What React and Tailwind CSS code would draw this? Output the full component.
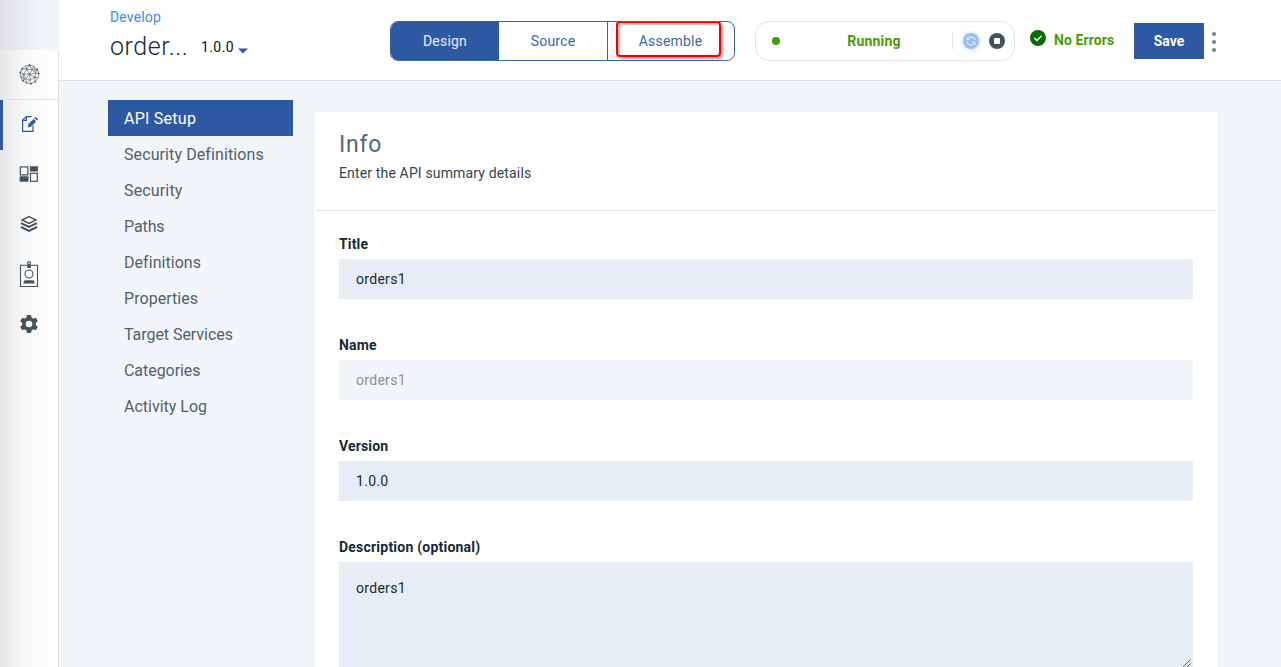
import React from "react";

const navItems = [
  ["API Setup", "tracking-[0.25px]"],
  ["Security Definitions", "tracking-[0.1px]"],
  ["Security", "tracking-[0.15px]"],
  ["Paths", "tracking-[-0.1px]"],
  ["Definitions", "tracking-[0.05px]"],
  ["Properties", "tracking-[0.05px]"],
  ["Target Services", "tracking-[-0.05px]"],
  ["Categories", "tracking-[-0.05px]"],
  ["Activity Log", "tracking-[0px]"],
];

function MeshIcon() {
  return (
    <svg width="21" height="21" viewBox="0 0 22 22" fill="none" stroke="#66737d" strokeWidth="0.75" strokeLinejoin="round">
      <path d="M11 1 L15.5 2.3 L19 5.5 L20.7 10 L20 14.5 L17 18.5 L12.5 20.8 L8 20 L4 17.5 L1.5 13.5 L1.3 9 L3.5 4.8 L7 2 Z" />
      <path d="M11 1 L8 5.5 L13.5 6 Z M15.5 2.3 L13.5 6 L19 5.5 L17.5 9.5 Z M20.7 10 L17.5 9.5 L16.5 14 L20 14.5 M17 18.5 L16.5 14 L12 16.5 L12.5 20.8 M8 20 L12 16.5 L7 15.5 Z M4 17.5 L7 15.5 L1.5 13.5 L5 10.5 Z M1.3 9 L5 10.5 L8 5.5 L3.5 4.8 Z M7 2 L8 5.5 M11 10.8 L8 5.5 M11 10.8 L13.5 6 M11 10.8 L17.5 9.5 M11 10.8 L16.5 14 M11 10.8 L12 16.5 M11 10.8 L7 15.5 M11 10.8 L5 10.5 M7 15.5 L5 10.5 M13.5 6 L17.5 9.5" />
      <g fill="#44525d" stroke="none">
        <circle cx="11" cy="1.2" r="0.9" /><circle cx="19" cy="5.5" r="0.9" /><circle cx="20.6" cy="10" r="0.9" />
        <circle cx="17" cy="18.5" r="0.9" /><circle cx="12.5" cy="20.7" r="0.9" /><circle cx="4" cy="17.5" r="0.9" />
        <circle cx="1.4" cy="9" r="0.9" /><circle cx="3.5" cy="4.8" r="0.9" /><circle cx="8" cy="5.5" r="0.8" />
        <circle cx="11" cy="10.8" r="0.8" /><circle cx="16.5" cy="14" r="0.8" />
      </g>
    </svg>
  );
}

function EditIcon() {
  return (
    <svg width="18" height="18" viewBox="0 0 18 18" fill="none">
      <path d="M10.5 1.6 H5.2 L1.6 5.2 V16.4 H12 V10.5 M5.4 1.6 V5.4 H1.6" stroke="#2d58a2" strokeWidth="1.2" />
      <path d="M6.7 12.6 L7.5 9 L12.6 4 L15.1 6.4 L10.1 11.6 Z" fill="#2d58a2" />
      <path d="M13.4 3.2 L14.7 1.9 L17.1 4.2 L15.8 5.6 Z" fill="#2d58a2" />
    </svg>
  );
}

function DashboardIcon() {
  return (
    <svg width="20" height="18" viewBox="0 0 20 18" fill="none" stroke="#44525d" strokeWidth="1.2">
      <rect x="1.3" y="1.9" width="7.6" height="8" />
      <rect x="11.5" y="8.3" width="6.8" height="8" />
      <path d="M10.9 1.3H18.9V6.6H10.9zM.7 11.2H9.5V16.8H.7z" fill="#44525d" stroke="none" />
    </svg>
  );
}

function LayersIcon() {
  return (
    <svg width="18" height="18" viewBox="0 0 18 18" fill="none" stroke="#44525d" strokeWidth="2">
      <path d="M9 1.6 L16 5 L9 8.4 L2 5 Z" strokeWidth="1.4" />
      <path d="M1 8.2 L9 12 L17 8.2 M1 12 L9 15.8 L17 12" />
    </svg>
  );
}

function BadgeIcon() {
  return (
    <svg width="20" height="28" viewBox="0 0 20 28" fill="none" stroke="#44525d">
      <path d="M8 5.2H1.5V26.5H18.5V5.2H12" strokeWidth="1.1" />
      <rect x="8.2" y="1.4" width="3.6" height="6.6" fill="#44525d" stroke="none" />
      <rect x="9.4" y="2.4" width="1.2" height="1.7" fill="#fff" stroke="none" />
      <circle cx="10" cy="14" r="4" strokeWidth="1.1" />
      <path d="M4.6 23.5V22Q4.6 20.3 6.4 20.3H13.6Q15.4 20.3 15.4 22V23.5Z" fill="#44525d" stroke="none" />
    </svg>
  );
}

function GearIcon() {
  return (
    <svg width="20" height="20" viewBox="0 0 20 20" fill="none">
      <g fill="#44525d">
        <path d="M8 1H12L12.7 5H7.3zM8 19H12L12.7 15H7.3z" />
        <path d="M8 1H12L12.7 5H7.3zM8 19H12L12.7 15H7.3z" transform="rotate(60 10 10)" />
        <path d="M8 1H12L12.7 5H7.3zM8 19H12L12.7 15H7.3z" transform="rotate(120 10 10)" />
      </g>
      <circle cx="10" cy="10" r="5.1" stroke="#44525d" strokeWidth="3.6" />
    </svg>
  );
}

function Sidebar() {
  return (
    <aside className="flex w-[59px] shrink-0 flex-col border-r border-[#dfe3e6] bg-linear-to-r from-[#e6e6e6] via-[#f9f9f9] via-45% to-white">
      <div className="-mr-px h-[50px] bg-linear-to-r from-[#dfe1e4] to-[#f2f5fa] to-75%" />
      <div className="flex h-[50px] items-center justify-center border-b border-[#dfe3e6]"><MeshIcon /></div>
      <div className="flex h-[50px] items-center justify-center border-l-[3px] border-[#2d58a2] pr-[2px] pb-[2px]"><EditIcon /></div>
      <div className="flex h-[50px] items-center justify-center pb-[2px]"><DashboardIcon /></div>
      <div className="flex h-[50px] items-center justify-center pb-[2px]"><LayersIcon /></div>
      <div className="flex h-[50px] items-center justify-center pb-[2px]"><BadgeIcon /></div>
      <div className="flex h-[50px] items-center justify-center pb-[2px]"><GearIcon /></div>
    </aside>
  );
}

function Header() {
  return (
    <header className="flex h-[81px] shrink-0 border-b border-[#dfe3e6] bg-white pl-[51px]">
      <div className="w-[280px] pt-[7px]">
        <div className="text-[14px] leading-5 tracking-[0.15px] text-[#4589e0]">Develop</div>
        <div className="flex h-10 items-center">
          <h1 className="w-[91px] text-[25px] font-light tracking-[0.55px] text-[#152935]">order...</h1>
          <span className="text-[14px] tracking-[0.4px] text-[#111]">1.0.0</span>
          <svg className="mt-[7px] ml-1" width="10" height="6" viewBox="0 0 10 6"><path d="M0 .5H10L5 5.5Z" fill="#2d58a2" /></svg>
        </div>
      </div>
      <div className="mt-[21px] flex h-10 w-[345px] overflow-hidden rounded-[8px] border border-[#3a66ad] text-[14px] tracking-[0.2px] text-[#3b66ad]">
        <div className="flex w-[108px] items-center justify-center bg-[#2d58a2] text-[#e8eef8]">Design</div>
        <div className="flex w-[109px] items-center justify-center border-r border-[#3a66ad]">Source</div>
        <div className="flex flex-1 items-start pl-[8px]">
          <div className="-mt-px flex h-9 w-[105px] items-center justify-center rounded-[4px] border-2 border-[#f40009] pt-[4px] pl-1 shadow-[2px_2px_3px_rgba(0,0,0,.4),inset_2px_2px_2px_rgba(0,0,0,.3)]">Assemble</div>
        </div>
      </div>
      <div className="mt-[21px] ml-5 flex h-10 w-[260px] items-center rounded-[14px] border border-[#dfe3e6]">
        <div className="ml-4 size-2 rounded-full bg-[#4b9b06]" />
        <div className="w-[172px] pl-[16px] text-center text-[14px] font-bold tracking-[0.2px] text-[#4b9b06]">Running</div>
        <div className="h-4 w-px bg-[#dfe3e6]" />
        <div className="ml-[10px] flex size-4 items-center justify-center rounded-full bg-[#9cbdf0] shadow-[0_0_3px_2px_#e2edfc]">
          <svg width="10" height="10" viewBox="0 0 10 10" fill="none" stroke="#e8f1ff" strokeWidth="1">
            <path d="M1.1 1V3.5H3.6M1.3 3.4A4 4 0 0 1 9 4.4M8.9 9V6.5H6.4M8.7 6.6A4 4 0 0 1 1 5.6" />
          </svg>
        </div>
        <div className="ml-[10px] flex size-4 items-center justify-center rounded-full bg-[#44525d]"><div className="size-[6px] rounded-[1px] bg-white" /></div>
      </div>
      <div className="mt-[30px] ml-[15px] flex h-4 w-[104px] items-center gap-2">
        <svg className="shrink-0" width="16" height="16" viewBox="0 0 16 16"><circle cx="8" cy="8" r="8" fill="#0a6d00" /><path d="M4.3 8L7 10.5L11.6 5.8" fill="none" stroke="#fff" strokeWidth="1.4" /></svg>
        <span className="mt-[4px] text-[14px] font-bold tracking-[0.1px] whitespace-nowrap text-[#4b9b06]">No Errors</span>
      </div>
      <button className="mt-[23px] h-9 w-[70px] bg-[#2d58a2] text-[14px] font-bold text-white">Save</button>
      <div className="mt-[32px] ml-[8px] flex flex-col gap-1">
        <i className="size-1 rounded-full bg-[#72828e]" />
        <i className="size-1 rounded-full bg-[#72828e]" />
        <i className="size-1 rounded-full bg-[#72828e]" />
      </div>
    </header>
  );
}

function Field({ label, value, disabled }) {
  return (
    <label className="mb-[36px] block">
      <span className="mb-[5px] block text-[14px] leading-5 font-bold tracking-[0.15px] text-[#152935]">{label}</span>
      <span className={disabled ? "flex h-10 items-center bg-[#f2f5fa] px-[17px] text-[14px] tracking-[0.3px] text-[#8a9094]" : "flex h-10 items-center bg-[#e6edf5] px-[17px] text-[14px] tracking-[0.3px] text-[#152935]"}>{value}</span>
    </label>
  );
}

export default function App() {
  return (
    <div className="flex h-screen w-full overflow-hidden bg-[#f2f5fa] font-['Roboto',sans-serif]">
      <Sidebar />
      <div className="flex min-w-0 flex-1 flex-col">
        <Header />
        <div className="flex min-h-0 flex-1">
          <nav className="mt-[19px] ml-[49px] w-[185px] shrink-0 text-[16px] text-[#53616b]">
            {navItems.map(([name, tracking], i) => (
              <div key={name} className={`flex h-9 items-center pt-[2px] pl-4 ${tracking} ${i === 0 ? "bg-[#2d58a2] text-white" : ""}`}>{name}</div>
            ))}
          </nav>
          <main className="mt-[31px] ml-[21px] h-[640px] w-[904px] shrink-0 bg-white shadow-[0_1px_2px_rgba(0,0,0,.12)]">
            <div className="mx-px h-[99px] border-b border-[#dfe3e6] pt-[18px] pl-6">
              <h2 className="text-[23px] leading-[30px] tracking-[0.8px] text-[#5a6872]">Info</h2>
              <p className="mt-[3px] text-[14px] leading-5 tracking-[0.15px] text-[#35444f]">Enter the API summary details</p>
            </div>
            <form className="pt-[23px] pr-[25px] pl-[25px]">
              <Field label="Title" value="orders1" />
              <Field label="Name" value="orders1" disabled />
              <Field label="Version" value="1.0.0" />
              <label className="block">
                <span className="mb-[5px] block text-[14px] leading-5 font-bold tracking-[0.22px] text-[#152935]">Description (optional)</span>
                <span className="flex h-[106px] items-start justify-between bg-[#e6edf5] pl-[17px] text-[14px] tracking-[0.3px] text-[#152935]">
                  <span className="mt-4 leading-5">orders1</span>
                  <svg className="mr-[2px] self-end" width="9" height="9" viewBox="0 0 9 9" stroke="#666" strokeWidth="1"><path d="M.5 8.5L8.5 .5M4.5 8.5L8.5 4.5" /></svg>
                </span>
              </label>
            </form>
          </main>
        </div>
      </div>
    </div>
  );
}
